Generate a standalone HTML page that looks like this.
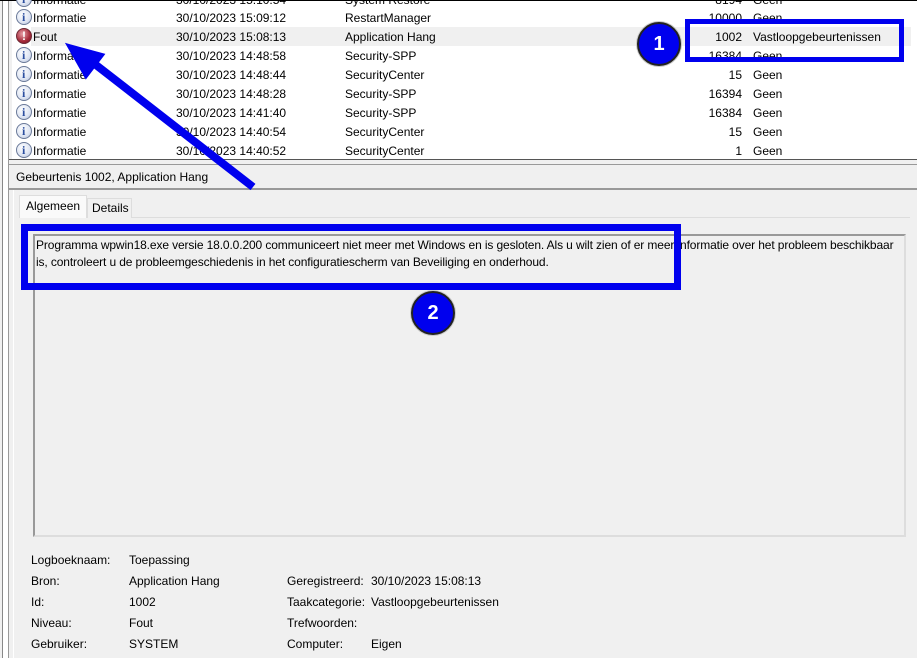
<!DOCTYPE html>
<html><head><meta charset="utf-8"><style>
*{margin:0;padding:0;box-sizing:border-box}
body{width:920px;height:658px;overflow:hidden;background:#fff;font-family:"Liberation Sans",sans-serif;font-size:12px;color:#000;position:relative}
.a{position:absolute;white-space:nowrap}
.row{position:absolute;left:12px;width:905px;height:19px}
.row span{position:absolute;top:3px}
.ic{position:absolute;left:4px;top:1px;width:16px;height:16px;border-radius:50%;border:1px solid #6b7a99;background:radial-gradient(circle at 40% 35%,#fff,#dde4f2 60%,#a9b6d3);}
.ic:after{content:"i";position:absolute;left:5px;top:0px;font:bold 12px "Liberation Serif",serif;color:#2c4fa0}
.er{border-color:#6c2a35;background:radial-gradient(circle at 40% 35%,#e8a0a8,#a52a3a 60%,#6e1a26)}
.er:after{content:"!";color:#fff;left:5px;font-family:"Liberation Sans",sans-serif}
.num{text-align:right;width:60px}
.lb{position:absolute;font-size:12px}
.circ{position:absolute;width:44px;height:44px;border-radius:50%;background:#0000ee;border:2px solid #222;box-shadow:0 0 0 1px #ccc;color:#fff;font:bold 20px "Liberation Sans",sans-serif;text-align:center;line-height:40px}
</style></head><body>
<div class="a" style="left:0;top:0;width:12px;height:658px;background:#f0f0f0"></div>
<div class="a" style="left:2px;top:0;width:1px;height:658px;background:#888"></div>
<div class="a" style="left:8px;top:0;width:1px;height:658px;background:#999"></div>
<div class="a" style="left:3px;top:0;width:5px;height:658px;background:#fff"></div>
<div class="a" style="left:0;top:0;width:920px;height:1px;background:#000"></div>
<div class="a" style="left:917px;top:0;width:3px;height:658px;background:#fff"></div>

<div class="row" style="top:-10px"><div class="ic"></div><span style="left:21px">Informatie</span><span style="left:164px">30/10/2023 15:10:54</span><span style="left:333px">System Restore</span><span class="num" style="left:670px">8194</span><span style="left:741px">Geen</span></div>
<div class="row" style="top:8px"><div class="ic"></div><span style="left:21px">Informatie</span><span style="left:164px">30/10/2023 15:09:12</span><span style="left:333px">RestartManager</span><span class="num" style="left:670px">10000</span><span style="left:741px">Geen</span></div>
<div class="row" style="top:27px;background:#f0f0f0;left:31px;width:880px"></div>
<div class="row" style="top:27px"><div class="ic er"></div><span style="left:21px">Fout</span><span style="left:164px">30/10/2023 15:08:13</span><span style="left:333px">Application Hang</span><span class="num" style="left:670px">1002</span><span style="left:741px">Vastloopgebeurtenissen</span></div>
<div class="row" style="top:46px"><div class="ic"></div><span style="left:21px">Informatie</span><span style="left:164px">30/10/2023 14:48:58</span><span style="left:333px">Security-SPP</span><span class="num" style="left:670px">16384</span><span style="left:741px">Geen</span></div>
<div class="row" style="top:65px"><div class="ic"></div><span style="left:21px">Informatie</span><span style="left:164px">30/10/2023 14:48:44</span><span style="left:333px">SecurityCenter</span><span class="num" style="left:670px">15</span><span style="left:741px">Geen</span></div>
<div class="row" style="top:84px"><div class="ic"></div><span style="left:21px">Informatie</span><span style="left:164px">30/10/2023 14:48:28</span><span style="left:333px">Security-SPP</span><span class="num" style="left:670px">16394</span><span style="left:741px">Geen</span></div>
<div class="row" style="top:103px"><div class="ic"></div><span style="left:21px">Informatie</span><span style="left:164px">30/10/2023 14:41:40</span><span style="left:333px">Security-SPP</span><span class="num" style="left:670px">16384</span><span style="left:741px">Geen</span></div>
<div class="row" style="top:122px"><div class="ic"></div><span style="left:21px">Informatie</span><span style="left:164px">30/10/2023 14:40:54</span><span style="left:333px">SecurityCenter</span><span class="num" style="left:670px">15</span><span style="left:741px">Geen</span></div>
<div class="row" style="top:141px"><div class="ic"></div><span style="left:21px">Informatie</span><span style="left:164px">30/10/2023 14:40:52</span><span style="left:333px">SecurityCenter</span><span class="num" style="left:670px">1</span><span style="left:741px">Geen</span></div>

<div class="a" style="left:9px;top:159px;width:908px;height:499px;background:#f0f0f0"></div>
<div class="a" style="left:9px;top:159px;width:908px;height:1px;background:#555"></div>
<div class="a" style="left:9px;top:164px;width:908px;height:1px;background:#999"></div>
<div class="a" style="left:9px;top:188px;width:908px;height:2px;background:#999"></div>
<div class="a" style="left:16px;top:170px">Gebeurtenis 1002, Application Hang</div>
<div class="a" style="left:13px;top:190px;width:904px;height:468px;background:#f0f0f0;border-left:1px solid #fff"></div>
<div class="a" style="left:20px;top:217px;width:890px;height:1px;background:#ddd"></div>
<div class="a" style="left:19px;top:195px;width:68px;height:23px;background:#fafafa;border:1px solid #ddd;border-bottom:none"></div>
<div class="a" style="left:26px;top:199px">Algemeen</div>
<div class="a" style="left:87px;top:198px;width:45px;height:20px;background:#f0f0f0;border:1px solid #ddd;border-bottom:none"></div>
<div class="a" style="left:92px;top:201px">Details</div>
<div class="a" style="left:33px;top:234px;width:873px;height:303px;border:2px solid #999;border-right:2px solid #ddd;border-bottom:2px solid #ddd;background:#f0f0f0"></div>
<div class="a" style="left:36px;top:237px;line-height:17px;letter-spacing:-0.12px">Programma wpwin18.exe versie 18.0.0.200 communiceert niet meer met Windows en is gesloten. Als u wilt zien of er meer informatie over het probleem beschikbaar<br>is, controleert u de probleemgeschiedenis in het configuratiescherm van Beveiliging en onderhoud.</div>

<div class="lb" style="left:31px;top:553px">Logboeknaam:</div><div class="lb" style="left:129px;top:553px">Toepassing</div>
<div class="lb" style="left:31px;top:574px">Bron:</div><div class="lb" style="left:129px;top:574px">Application Hang</div>
<div class="lb" style="left:287px;top:574px">Geregistreerd:</div><div class="lb" style="left:371px;top:574px">30/10/2023 15:08:13</div>
<div class="lb" style="left:31px;top:595px">Id:</div><div class="lb" style="left:129px;top:595px">1002</div>
<div class="lb" style="left:287px;top:595px">Taakcategorie:</div><div class="lb" style="left:371px;top:595px">Vastloopgebeurtenissen</div>
<div class="lb" style="left:31px;top:616px">Niveau:</div><div class="lb" style="left:129px;top:616px">Fout</div>
<div class="lb" style="left:287px;top:616px">Trefwoorden:</div>
<div class="lb" style="left:31px;top:637px">Gebruiker:</div><div class="lb" style="left:129px;top:637px">SYSTEM</div>
<div class="lb" style="left:287px;top:637px">Computer:</div><div class="lb" style="left:371px;top:637px">Eigen</div>

<div class="a" style="left:685px;top:19px;width:219px;height:43px;border:5px solid #0000ee"></div>
<div class="a" style="left:21px;top:224px;width:660px;height:66px;border:7px solid #0000ee"></div>
<div class="circ" style="left:637px;top:22px">1</div>
<div class="circ" style="left:411px;top:291px">2</div>
<svg class="a" style="left:0;top:0" width="920" height="658">
<line x1="253" y1="187" x2="96" y2="65" stroke="#0000ee" stroke-width="8"/>
<polygon points="69,46 102,55 86,76" fill="#0000ee" stroke="#0000ee" stroke-width="4" stroke-linejoin="miter"/>
</svg>
</body></html>
